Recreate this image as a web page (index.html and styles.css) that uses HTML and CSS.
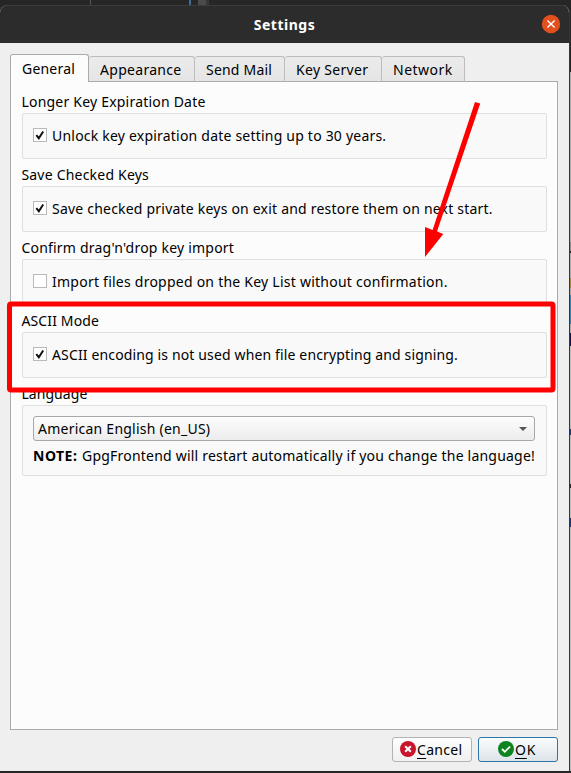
FILE: index.html
```html
<!DOCTYPE html>
<html lang="en">
<head>
<meta charset="utf-8">
<title>Settings</title>
<link rel="stylesheet" href="styles.css">
</head>
<body>
<div class="desktop">
  <div class="strip-top"><i class="line"></i><i class="blue"></i><i class="grey"></i></div>
  <div class="strip-right"></div>
  <div class="window">
    <header class="titlebar">
      <span class="title">Settings</span>
      <svg class="close" width="20" height="20" viewBox="0 0 20 20"><circle cx="10" cy="10" r="9.2" fill="#e2501d"/><path d="M6.4 6.4l7.2 7.2M13.6 6.4l-7.2 7.2" stroke="#fff" stroke-width="1.4"/></svg>
    </header>
    <main class="body">
      <nav class="tabs">
        <div class="tab active w-general"><span class="t-general">General</span></div>
        <div class="tab w-appearance"><span class="t-appearance">Appearance</span></div>
        <div class="tab w-mail"><span class="t-mail">Send Mail</span></div>
        <div class="tab w-server"><span class="t-server">Key Server</span></div>
        <div class="tab w-network"><span class="t-network">Network</span></div>
      </nav>
      <section class="pane">
        <h2><span class="t-longer">Longer Key Expiration Date</span></h2>
        <div class="group"><i class="check"><svg width="12" height="12" viewBox="0 0 12 12"><path d="M2.3 6.2l2.5 3L9.2 2.5" /></svg></i><span class="t-unlock">Unlock key expiration date setting up to 30 years.</span></div>
        <h2><span class="t-savekeys">Save Checked Keys</span></h2>
        <div class="group"><i class="check"><svg width="12" height="12" viewBox="0 0 12 12"><path d="M2.3 6.2l2.5 3L9.2 2.5" /></svg></i><span class="t-restore">Save checked private keys on exit and restore them on next start.</span></div>
        <h2><span class="t-confirm">Confirm drag'n'drop key import</span></h2>
        <div class="group"><i class="check"></i><span class="t-import">Import files dropped on the Key List without confirmation.</span></div>
        <h2><span class="t-ascii">ASCII Mode</span></h2>
        <div class="group"><i class="check"><svg width="12" height="12" viewBox="0 0 12 12"><path d="M2.3 6.2l2.5 3L9.2 2.5" /></svg></i><span class="t-encoding">ASCII encoding is not used when file encrypting and signing.</span></div>
        <h2><span class="t-language">Language</span></h2>
        <div class="group language">
          <div class="select"><span class="t-american">American English (en_US)</span><i class="caret"></i></div>
          <p class="note"><b class="t-note">NOTE:</b><span class="t-restart">GpgFrontend will restart automatically if you change the language!</span></p>
        </div>
      </section>
      <footer class="actions">
        <div class="button"><svg width="16" height="16" viewBox="0 0 16 16"><circle cx="8" cy="8" r="8" fill="#c7162b"/><path d="M5.2 5.2l5.6 5.6M10.8 5.2l-5.6 5.6" stroke="#fff" stroke-width="2" fill="none"/></svg><span class="t-cancel"><u>C</u>ancel</span></div>
        <div class="button primary"><svg width="16" height="16" viewBox="0 0 16 16"><circle cx="8" cy="8" r="8" fill="#0e8420"/><path d="M4 8l2.8 2.8L12 5.6" stroke="#fff" stroke-width="1.8" fill="none"/></svg><span class="t-ok"><u>O</u>K</span></div>
      </footer>
    </main>
  </div>
  <svg class="annotation" width="571" height="773" viewBox="0 0 571 773">
    <rect x="9.5" y="304" width="543.5" height="86" rx="1.5" fill="none" stroke="#f00" stroke-width="5"/>
    <path d="M475 102l5.2 1.6-43.2 128 6.3 2.5L425 257V227l7.6 3z" fill="#f00"/>
  </svg>
</div>
</body>
</html>
```
FILE: styles.css
```css
* { box-sizing: border-box; }
body { margin: 0; font: 14px/18px "Noto Sans", sans-serif; letter-spacing: .21px; color: #000; }
h2, p { margin: 0; font-size: inherit; font-weight: 400; }
span, b { white-space: nowrap; }
.desktop { position: relative; width: 571px; height: 773px; padding-top: 5px; background: #262626; overflow: hidden; }
.strip-top { position: absolute; left: 0; top: 0; width: 571px; height: 5px; }
.strip-top i { position: absolute; top: 0; height: 5px; }
.line { left: 90px; width: 1px; background: #555; }
.blue { left: 189px; width: 2px; background: #3e6f9f; }
.grey { left: 198px; width: 8px; background: #4b4b4b; box-shadow: 3px 0 #34373c; }
.strip-right { position: absolute; left: 570px; top: 72px; width: 1px; height: 699px; background: linear-gradient(#aaa 0 170px, #888 170px 179px, #222 179px 181px, #aaa 181px 206px, #a78645 206px 216px, #aaa 216px 223px, #397eb0 223px 252px, #aaa 252px 261px, #13134b 261px 274px, #bbb 274px 357px, #183a73 357px 363px, #bbb 363px 412px, #222 412px 416px, #bbb 416px 446px, #183a73 446px 455px, #bbb 455px); }
.window { width: 570px; height: 766px; border-right: 1px solid #353535; border-radius: 8px 8px 0 0; background: #efefef; overflow: hidden; }
.titlebar { position: relative; height: 38px; background: #2c2c2c; border-top: 1px solid #3c3c3c; display: flex; align-items: center; justify-content: center; color: #fff; font-weight: 700; letter-spacing: .5px; }
.close { position: absolute; left: 541px; top: 8px; }
.body { padding: 11px 11px 8px 10px; display: flex; flex-direction: column; }
.tabs { display: flex; align-items: flex-end; height: 28px; margin-bottom: -1px; position: relative; }
.tab { height: 26px; border: 1px solid #bdbdbd; border-left: 0; border-bottom-color: #ababab; border-radius: 3px 3px 0 0; background: linear-gradient(#ebebeb, #e5e5e5); display: flex; padding: 4px 0 0 11px; }
.tab.active { height: 28px; border: 1px solid #ababab; border-bottom: 0; background: #fcfcfc; padding: 5px 0 0 11px; }
.w-general { width: 79px; } .w-appearance { width: 106px; } .w-mail { width: 90px; } .w-server { width: 97px; } .w-network { width: 83px; }
.t-appearance, .t-server, .t-cancel { letter-spacing: .3px; }
.t-network, .t-note { letter-spacing: .5px; }
.t-import, .t-american { letter-spacing: .24px; }
.t-encoding, .t-ascii { letter-spacing: .14px; }
.t-language { letter-spacing: .06px; }
.t-ok { letter-spacing: .8px; }
.pane { height: 649px; border: 1px solid #ababab; background: #fcfcfc; padding: 11px 10px 0 11px; }
.pane h2 { height: 20px; margin-left: -.6px; }
.group { height: 46px; margin-bottom: 7px; border: 1px solid #dfdfdf; border-radius: 2px; background: #f9f9f9; padding: 0 11px 0 10px; display: flex; align-items: center; }
.check { width: 14px; height: 14px; border: 1px solid #bababa; background: #fff; margin: 0 5px 2px 0; display: block; }
.check svg { display: block; fill: none; stroke: #111; stroke-width: 2; }
.group.language { height: 71px; display: block; padding-top: 10px; }
.select { height: 25px; border: 1px solid #a8a8a8; border-radius: 3px; background: linear-gradient(#fdfdfd, #ececec); display: flex; align-items: center; justify-content: space-between; padding: 0 7px 0 4px; }
.caret { border: 4px solid transparent; border-top: 4px solid #555; border-bottom: 0; }
.note { display: flex; justify-content: space-between; margin-top: 6px; }
.actions { display: flex; justify-content: flex-end; gap: 6px; margin-top: 7px; }
.button { width: 80px; height: 25px; border: 1px solid #b3b3b3; border-radius: 3px; background: linear-gradient(#fefefe, #f0f0f0); display: flex; align-items: center; padding-left: 7px; gap: 1px; }
.button.primary { border-color: #2d76a8; background: linear-gradient(#fafcfd, #dce4ea); padding-left: 19px; }
.button svg { margin-bottom: 1px; }
.button u { text-underline-offset: 3px; }
.annotation { position: absolute; left: 0; top: 0; }
```
